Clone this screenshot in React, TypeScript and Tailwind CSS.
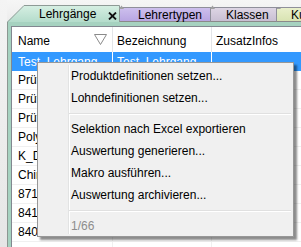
import React from "react";

const rows = [
  ["Test_Lehrgang", "Test_Lehrgang", ""],
  ["Prüfung 1", "Prüfung 1", ""],
  ["Prüfung 2", "Prüfung 2", ""],
  ["Prüfung 3", "Prüfung 3", ""],
  ["Polymechaniker", "Polymechaniker", ""],
  ["K_Dienst", "K_Dienst", ""],
  ["Chirurgie", "Chirurgie", ""],
  ["871 Kurs", "871 Kurs", ""],
  ["841 Kurs", "841 Kurs", ""],
  ["840 Kurs", "840 Kurs", ""],
];

function Notch() {
  return (
    <svg className="absolute left-[-1px] top-[-3px]" width="6" height="4" viewBox="0 0 6 4">
      <path d="M0 4 L2.5 0.5 L5 4 Z" fill="#a0a0a0" />
    </svg>
  );
}

function MenuItem({ children, disabled }: { children: React.ReactNode; disabled?: boolean }) {
  return (
    <div className={`h-[22px] flex items-center pl-[33px] ${disabled ? "text-[#8d8d8d]" : "text-black"}`}>
      {children}
    </div>
  );
}

function Sep() {
  return (
    <div className="h-[9px] flex items-center pl-[31px] pr-[2px]">
      <div className="w-full border-t border-[#e0e0e0] border-b border-b-white" />
    </div>
  );
}

export default function App() {
  return (
    <div className="w-[301px] h-[247px] overflow-hidden relative flex bg-[#ebebeb] text-[12px] leading-none font-['Liberation_Sans',Arial,sans-serif] text-black">
      <div className="w-[7px] shrink-0 bg-gradient-to-b from-[#f4f4f4] to-[#e6e6e6]" />
      <div className="flex-1 flex flex-col min-w-0">
        {/* tab strip */}
        <div className="h-[22px] shrink-0 flex items-end bg-gradient-to-b from-[#f6f6f6] to-[#ececec]">
          {/* active tab */}
          <div className="relative h-[17px] w-[113px] shrink-0 flex items-center">
            <svg className="absolute left-0 top-0" width="113" height="17" viewBox="0 0 113 17">
              <defs>
                <linearGradient id="ag" x1="0" y1="0" x2="0" y2="1">
                  <stop offset="0" stopColor="#d6efe3" />
                  <stop offset="1" stopColor="#b4dccb" />
                </linearGradient>
              </defs>
              <path d="M0 17 L17 0.5 L112.5 0.5 L112.5 17 Z" fill="url(#ag)" />
              <path d="M0.5 17 L17 0.5 L112.5 0.5 L112.5 17" fill="none" stroke="#8e9a96" strokeWidth="1" />
            </svg>
            <span className="relative ml-[32px] mt-[1px] text-[12px]">Lehrgänge</span>
            <svg className="absolute left-[101px] top-[7px]" width="9" height="8" viewBox="0 0 9 8">
              <path d="M1 0.5 L8 7.5 M8 0.5 L1 7.5" stroke="#111" strokeWidth="1.8" />
            </svg>
          </div>
          {/* Lehrertypen */}
          <div className="relative h-[15px] w-[91px] shrink-0 flex items-center pl-[18px] bg-gradient-to-b from-[#cdbfed] to-[#b8a6e2] border-t border-r border-[#8f8f9a] border-b border-b-[#8a8a8a]">
            <Notch />
            <span className="mt-[1px]">Lehrertypen</span>
          </div>
          {/* Klassen */}
          <div className="relative h-[15px] w-[66px] shrink-0 flex items-center pl-[15px] bg-gradient-to-b from-[#ddd5e4] to-[#c9bfd3] border-t border-r border-[#8f8f9a] border-b border-b-[#8a8a8a]">
            <Notch />
            <span className="mt-[1px]">Klassen</span>
          </div>
          {/* Ku */}
          <div className="relative h-[15px] flex-1 flex items-center pl-[14px] bg-gradient-to-b from-[#e9efcb] to-[#d8e3b2] border-t border-[#8f8f9a] border-b border-b-[#8a8a8a] overflow-hidden whitespace-nowrap">
            <Notch />
            <span className="mt-[1px]">Kurse</span>
          </div>
        </div>
        {/* panel */}
        <div className="flex-1 flex flex-col bg-[#a6d2c0] border-l border-[#8c9792] pl-[3px] pt-[4px] min-h-0">
          <div className="flex-1 bg-white border-l border-t border-[#828790] flex flex-col min-h-0">
            {/* header */}
            <div className="h-[25px] shrink-0 flex bg-white">
              <div className="w-[101px] shrink-0 relative flex items-center pl-[6px] border-r border-[#e3e5e8]">
                <span className="mt-[2px]">Name</span>
                <svg className="absolute left-[82px] top-[7px]" width="13" height="11" viewBox="0 0 13 11">
                  <path d="M0.5 0.5 L12.5 0.5 L6.5 10.5 Z" fill="none" stroke="#8a8a8a" strokeWidth="1" />
                </svg>
              </div>
              <div className="w-[99px] shrink-0 flex items-center pl-[4px] border-r border-[#e3e5e8]">
                <span className="mt-[2px]">Bezeichnung</span>
              </div>
              <div className="flex-1 flex items-center pl-[4px]">
                <span className="mt-[2px]">ZusatzInfos</span>
              </div>
            </div>
            {rows.map((r, i) => (
              <div
                key={i}
                className={`h-[19px] shrink-0 flex whitespace-nowrap ${i === 0 ? "bg-[#3399ff] text-white" : "border-b border-[#f0f0f0]"}`}
              >
                <div className={`w-[101px] shrink-0 overflow-hidden flex items-center pl-[6px] border-r ${i === 0 ? "border-white" : "border-[#f0f0f0]"}`}>
                  {r[0]}
                </div>
                <div className={`w-[99px] shrink-0 overflow-hidden flex items-center pl-[4px] border-r ${i === 0 ? "border-white" : "border-[#f0f0f0]"}`}>
                  {r[1]}
                </div>
                <div className="flex-1" />
              </div>
            ))}
            <div className="flex-1 flex">
              <div className="w-[101px] border-r border-[#f0f0f0]" />
              <div className="w-[99px] border-r border-[#f0f0f0]" />
            </div>
          </div>
        </div>
      </div>

      {/* context menu */}
      <div className="absolute left-[37px] top-[62px] w-[257px] h-[175px] bg-[#f0f0f0] border border-[#979797] shadow-[3px_3px_2px_rgba(0,0,0,0.45)] pt-[2px]">
        <div className="absolute left-[30px] top-[2px] bottom-[2px] w-[2px] border-l border-[#e2e3e3] border-r border-r-white" />
        <div className="relative">
          <MenuItem>Produktdefinitionen setzen...</MenuItem>
          <MenuItem>Lohndefinitionen setzen...</MenuItem>
          <Sep />
          <MenuItem>Selektion nach Excel exportieren</MenuItem>
          <MenuItem>Auswertung generieren...</MenuItem>
          <MenuItem>Makro ausführen...</MenuItem>
          <MenuItem>Auswertung archivieren...</MenuItem>
          <Sep />
          <MenuItem disabled>1/66</MenuItem>
        </div>
      </div>
    </div>
  );
}
